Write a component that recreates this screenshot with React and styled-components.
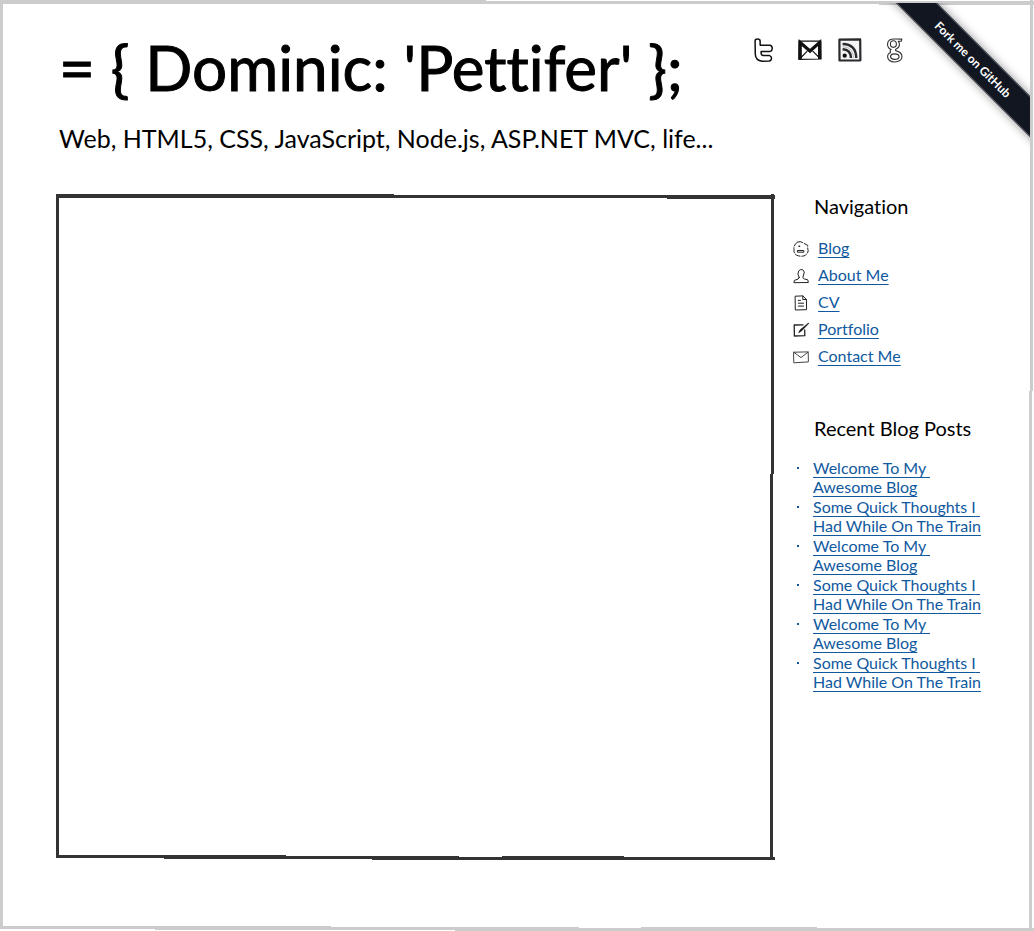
import React from "react";
import styled, { createGlobalStyle, css } from "styled-components";

const GlobalStyle = createGlobalStyle`
  * { box-sizing: border-box; }
  body {
    margin: 0;
    background: #fff;
    color: #000;
    font-family: Lato, "Liberation Sans", sans-serif;
    font-variant-ligatures: none;
  }
  h1, h2, p, ul { margin: 0; padding: 0; font-weight: 400; }
`;

/* A hand-drawn looking outline: straight strokes with a few one-pixel steps. */
const sketchBorder = (c) => css`
  background:
    linear-gradient(90deg, ${c} 47%, transparent 47%) 0 0 / 100% 1px no-repeat,
    linear-gradient(${c}, ${c}) 0 1px / 100% 3px no-repeat,
    linear-gradient(90deg, transparent 85%, ${c} 85%) 0 4px / 100% 1px no-repeat,
    linear-gradient(${c}, ${c}) 0 0 / 3px calc(100% - 2px) no-repeat,
    linear-gradient(${c} 42%, transparent 42%) right 1px top 0 / 1px 100% no-repeat,
    linear-gradient(${c}, ${c}) right 2px top 0 / 2px 100% no-repeat,
    linear-gradient(transparent 42%, ${c} 42%) right 4px top 0 / 1px 100% no-repeat,
    linear-gradient(90deg, ${c} 32%, transparent 32%) left 0 bottom 4px / 100% 1px no-repeat,
    linear-gradient(90deg, ${c} 56%, transparent 56% 62%, ${c} 62% 79%, transparent 79%) left 0 bottom 3px / 100% 1px no-repeat,
    linear-gradient(${c}, ${c}) left 0 bottom 2px / 100% 1px no-repeat,
    linear-gradient(90deg, transparent 15%, ${c} 15%) left 0 bottom 1px / 100% 1px no-repeat,
    linear-gradient(90deg, transparent 44%, ${c} 44%) left 0 bottom 0 / 100% 1px no-repeat;
`;

const Page = styled.div`
  position: relative;
  min-height: 100vh;
  padding: 32px 48px 71px 56px;
  ${sketchBorder("#ccc")}
`;

const Header = styled.header`
  display: flex;
  justify-content: space-between;
  height: 162px;
`;

const Title = styled.h1`
  font-size: 62px;
  line-height: 70px;
  padding-left: 3px;
  white-space: nowrap;
  -webkit-text-stroke: 1px #000;
`;

const Tagline = styled.p`
  font-size: 25px;
  line-height: 32px;
  padding: 20px 0 0 3px;
  white-space: nowrap;
`;

const Social = styled.nav`
  display: flex;
  gap: 16px;
  padding: 6px 82px 0 0;
`;

const SocialLink = styled.a`
  display: block;
  height: 25px;
  color: #111;
`;

const SocialIcon = styled.svg`
  display: block;
  width: ${(p) => p.$width}px;
  height: 25px;
  fill: none;
  stroke: currentColor;
  stroke-width: 1.5;
  stroke-linecap: round;
  stroke-linejoin: round;
`;

const RibbonCorner = styled.div`
  position: absolute;
  top: 3px;
  right: 4px;
  width: 150px;
  height: 150px;
  overflow: hidden;
  pointer-events: none;
`;

const Ribbon = styled.a`
  position: absolute;
  top: 42px;
  right: -53px;
  width: 220px;
  height: 29px;
  line-height: 27px;
  transform: rotate(45deg);
  text-align: center;
  font-size: 12px;
  font-weight: 700;
  color: #fff;
  text-decoration: none;
  background: #121621;
  border: 1px solid #50545d;
  box-shadow: 0 0 10px rgba(0, 0, 0, 0.45);
  pointer-events: auto;
`;

const Content = styled.div`
  display: flex;
  gap: 18px;
`;

const Canvas = styled.main`
  flex: 1;
  min-height: 666px;
  ${sketchBorder("#333")}
`;

const Sidebar = styled.aside`
  width: 193px;
`;

const Heading = styled.h2`
  font-size: 20px;
  line-height: 24px;
  padding-left: 21px;
  white-space: nowrap;
`;

const NavList = styled.ul`
  list-style: none;
  padding: 16px 0 47px;
`;

const NavItem = styled.li`
  display: flex;
  align-items: center;
  gap: 9px;
  height: 27px;
`;

const NavIcon = styled.svg`
  width: 16px;
  height: 16px;
  margin-top: 2px;
  fill: none;
  stroke: #222;
  stroke-width: 1;
  stroke-linecap: round;
  stroke-linejoin: round;
`;

const Link = styled.a`
  color: #1059a0;
  font-size: 16px;
  line-height: 19px;
  text-underline-offset: 3px;
  text-decoration-thickness: 1px;
  white-space: nowrap;
`;

const PostList = styled.ul`
  display: flex;
  flex-direction: column;
  gap: 1px;
  list-style: none;
  padding-top: 18px;
`;

const Post = styled.li`
  display: flex;
  line-height: 19px;
  color: #1059a0;
  &::before {
    content: "";
    width: 2px;
    height: 2px;
    margin: 9px 14px 0 4px;
    background: currentColor;
  }
`;

const social = [
  {
    label: "Twitter",
    width: 28,
    art: (
      <path d="M1.1 2.6Q1.3.9 3.5.9 6.1.9 6.1 3L6.2 7.3 16 7.2Q18.3 7.8 18.2 10.5 18 13.4 15.8 13.4L7.1 13.5Q6.9 16.9 8.7 17.4L15.6 17.6Q17.6 18.2 17.5 20.3 17.4 22.9 15 23.1L8.1 23.2Q1.7 22.4 1.3 16.4Z" />
    ),
  },
  {
    label: "Gmail",
    width: 24,
    art: (
      <>
        <path d="M1 3.2 22.8 3 23 21 .8 21.3ZM3 19.5 9 13.4M21 19.4 15 13.4" strokeWidth="1.2" />
        <path strokeWidth="3.2" strokeLinejoin="miter" strokeLinecap="butt" d="M2.2 21V4.5L12 13 21.6 4.5V21" />
      </>
    ),
  },
  {
    label: "RSS",
    width: 24,
    art: (
      <>
        <path strokeWidth="2.2" stroke="#2a2a2e" fill="#f4f4f4" d="M1.4 1.7 22.2 1.4 22.4 22.3 1.5 22.5Z" />
        <path strokeWidth="2.4" stroke="#2a2a2e" strokeLinecap="butt" d="M4.6 6Q18 6.2 18.3 20M4.6 11.2Q12.8 11.6 13 20" />
        <circle cx="6.7" cy="17.7" r="1.4" fill="currentColor" />
        <path stroke="#bbb" strokeWidth="1" d="M5 8.7Q15 9 15.7 19.6" />
      </>
    ),
  },
  {
    label: "Google",
    width: 26,
    art: (
      <g strokeWidth="1.1" stroke="#333">
        <path d="M23.8 1.1 17.4 1Q9.6.5 9.5 6.2 9.7 10.3 13.2 11.4 11.4 12.6 12.6 14.4 9.5 15.6 9.6 18.9 10.1 23.8 16.5 24 23.8 23.7 24 18.5 23.8 14.2 18.2 12.9 16.7 12.1 18.2 11 21.8 9.5 21.4 5.8 21.2 4.4 20.3 3.3L23.3 3.1Z" />
        <ellipse cx="15.4" cy="6.1" rx="3" ry="3.3" />
        <path d="M12.5 18.4Q13 15.8 16.3 15.9 20.8 16 21.1 18.6 20.8 21.5 16.6 21.4 12.7 21.2 12.5 18.4Z" />
      </g>
    ),
  },
];

const pages = [
  {
    label: "Blog",
    art: (
      <>
        <path strokeDasharray="5 1.8" d="M4.8 1Q8-.2 10.8 2.3L14.8 4.4Q14.4 7 15.2 9.8 14.5 13.6 11 14.9 7.2 15.8 3.6 14.2.4 12.2 1 8.5.4 3.2 4.8 1Z" />
        <path strokeWidth="1.4" d="M6 5.3H6.6" />
        <path d="M4.8 9.5H10.8V11.2H4.8Z" />
      </>
    ),
  },
  {
    label: "About Me",
    art: (
      <path d="M6.2 9.6Q3.8 5.8 5.6 3 7.2.9 9.7 1.7 12.4 3.7 10.6 7L9.8 9.6Q10 11 14.8 11.8L15.3 14.5.9 14.7 1.4 12.4Q6.3 11.4 6.2 9.6Z" />
    ),
  },
  {
    label: "CV",
    art: (
      <>
        <path d="M2.5 1.2 9.8.9 13.4 4.3 13.6 14.7 2.7 15ZM9.8 1V4.5H13.4" />
        <path d="M5.3 5.4H7.5M5.3 8.2H10.6M5.3 11.1H10.6" />
      </>
    ),
  },
  {
    label: "Portfolio",
    art: (
      <>
        <path strokeWidth="1.3" d="M10 2.8 1.2 3 1.4 14 11.8 13.7 11.7 8" />
        <path strokeWidth="1.1" d="M15.4 1.4 8.2 8.8 6 10.4 7.4 8Z" />
      </>
    ),
  },
  {
    label: "Contact Me",
    art: <path d="M.9 3.2 15.2 2.9 15.4 12.9 1.2 13.8ZM1 3.4 8 8.6 15.1 3.1" stroke="#444" />,
  },
];

const posts = [
  ["Welcome To My", "Awesome Blog"],
  ["Some Quick Thoughts I", "Had While On The Train"],
  ["Welcome To My", "Awesome Blog"],
  ["Some Quick Thoughts I", "Had While On The Train"],
  ["Welcome To My", "Awesome Blog"],
  ["Some Quick Thoughts I", "Had While On The Train"],
];

export default function App() {
  return (
    <Page>
      <GlobalStyle />
      <Header>
        <div>
          <Title>{"= { Dominic: 'Pettifer' };"}</Title>
          <Tagline>Web, HTML5, CSS, JavaScript, Node.js, ASP.NET MVC, life...</Tagline>
        </div>
        <Social>
          {social.map(({ label, width, art }) => (
            <SocialLink key={label} href="#social" aria-label={label}>
              <SocialIcon $width={width} viewBox={`0 0 ${width} 25`}>{art}</SocialIcon>
            </SocialLink>
          ))}
        </Social>
      </Header>
      <RibbonCorner>
        <Ribbon href="#github">Fork me on GitHub</Ribbon>
      </RibbonCorner>
      <Content>
        <Canvas />
        <Sidebar>
          <Heading>Navigation</Heading>
          <NavList>
            {pages.map(({ label, art }) => (
              <NavItem key={label}>
                <NavIcon viewBox="0 0 16 16" aria-hidden="true">{art}</NavIcon>
                <Link href="#page">{label}</Link>
              </NavItem>
            ))}
          </NavList>
          <Heading>Recent Blog Posts</Heading>
          <PostList>
            {posts.map(([first, second], i) => (
              <Post key={i}>
                <Link href="#post">{first}&nbsp;<br />{second}</Link>
              </Post>
            ))}
          </PostList>
        </Sidebar>
      </Content>
    </Page>
  );
}
